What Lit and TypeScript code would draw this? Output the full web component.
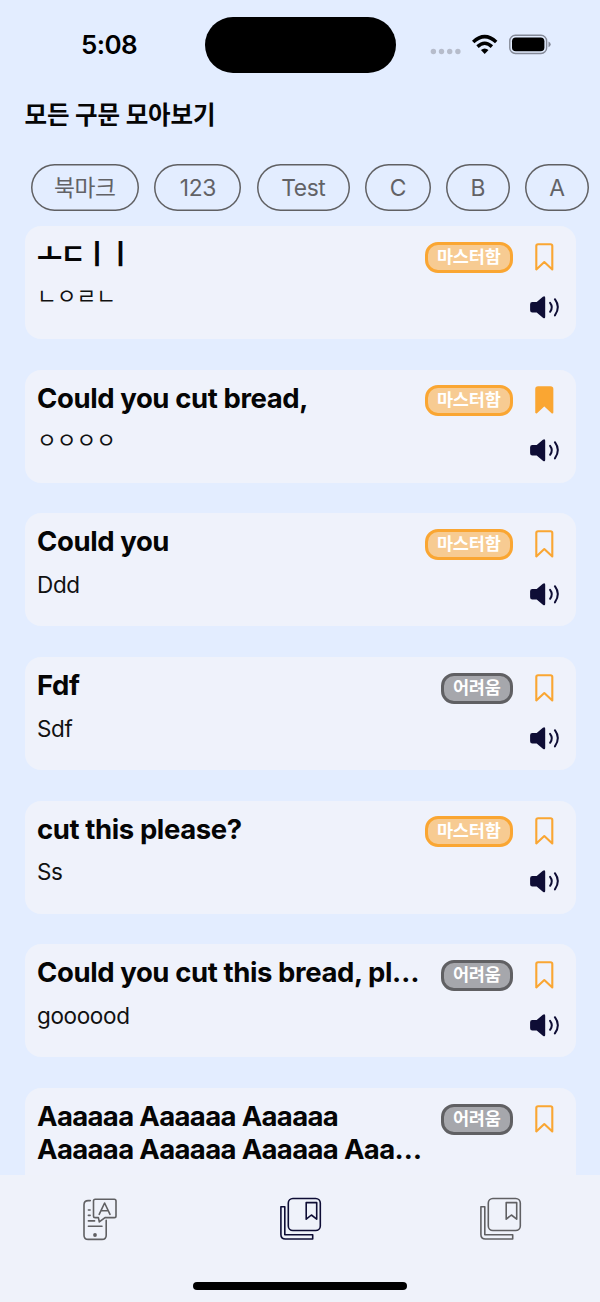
import { LitElement, html, css, svg } from "lit";
import { customElement, property } from "lit/decorators.js";
import { classMap } from "lit/directives/class-map.js";

type Level = "master" | "hard";
interface Phrase {
  title: string;
  meaning: string;
  level: Level;
  saved?: boolean;
}

const LABELS: Record<Level, string> = { master: "마스터함", hard: "어려움" };

const PHRASES: Phrase[] = [
  { title: "ㅗㄷㅣㅣ", meaning: "ㄴㅇㄹㄴ", level: "master" },
  { title: "Could you cut bread,", meaning: "ㅇㅇㅇㅇ", level: "master", saved: true },
  { title: "Could you", meaning: "Ddd", level: "master" },
  { title: "Fdf", meaning: "Sdf", level: "hard" },
  { title: "cut this please?", meaning: "Ss", level: "master" },
  { title: "Could you cut this bread, pl…", meaning: "goooood", level: "hard" },
  { title: "Aaaaaa Aaaaaa Aaaaaa\nAaaaaa Aaaaaa Aaaaaa Aaa…", meaning: "", level: "hard" },
];

const CHIPS = [
  { label: "북마크", width: 108.5 },
  { label: "123", width: 87 },
  { label: "Test", width: 93 },
  { label: "C", width: 65.5 },
  { label: "B", width: 63.5 },
  { label: "A", width: 64 },
];

const isJamo = (s: string) => /^[\u3131-\u318e]+$/.test(s);

@customElement("phrase-card")
class PhraseCard extends LitElement {
  @property({ attribute: false }) phrase!: Phrase;

  static styles = css`
    :host { display: block; flex: none; }
    .card {
      box-sizing: border-box;
      height: 113px;
      padding: 12px 17px 0 12.5px;
      border-radius: 16px;
      background: #eff2fb;
      display: flex;
      align-items: flex-start;
    }
    .card.tall { height: 146px; }
    .text { flex: 1; min-width: 0; }
    .title {
      font-size: 27.5px;
      line-height: 33px;
      font-weight: 700;
      letter-spacing: -0.4px;
      white-space: pre;
      color: #050505;
    }
    .meaning {
      margin-top: 12.5px;
      font-size: 22.5px;
      line-height: 28px;
      letter-spacing: -0.35px;
      color: #111;
    }
    .title.jamo { letter-spacing: -1.7px; }
    .meaning.jamo { margin-top: 11px; font-size: 21.5px; letter-spacing: 0; }
    .tall .title { letter-spacing: -0.65px; }
    .badge {
      box-sizing: border-box;
      width: 88.5px;
      height: 31px;
      margin: 3.7px 16px 0 0;
      border: 3px solid #faa632;
      border-radius: 13px;
      background: #f7cb92;
      color: #fff;
      font-size: 17.5px;
      line-height: 24px;
      font-weight: 700;
      letter-spacing: -0.2px;
      text-align: center;
    }
    .badge.hard { width: 72.5px; border-color: #606063; background: #a6a7ac; }
    .icons { width: 30px; padding-top: 4.7px; display: flex; flex-direction: column; align-items: center; gap: 25px; }
    .tall .icons { gap: 58px; }
    svg { display: block; overflow: visible; }
    .mark { fill: none; stroke: #faa632; stroke-width: 2.1; stroke-linejoin: round; }
    .mark.saved { fill: #faa632; }
    .solid { fill: #0e0d35; }
    .wave { fill: none; stroke: #0e0d35; stroke-width: 2; stroke-linecap: round; }
  `;

  render() {
    const p = this.phrase;
    return html`<div class=${classMap({ card: true, tall: p.title.includes("\n") })}>
      <div class="text">
        <div class=${classMap({ title: true, jamo: isJamo(p.title) })}>${p.title}</div>
        <div class=${classMap({ meaning: true, jamo: isJamo(p.meaning) })}>${p.meaning}</div>
      </div>
      <div class="badge ${p.level}">${LABELS[p.level]}</div>
      <div class="icons">
        <svg width="18" height="28" viewBox="-.3 0 18 28">
          <path class=${classMap({ mark: true, saved: !!p.saved })} d="M1 26.4V3Q1 1.2 2.8 1.2H15.2Q17 1.2 17 3V26.4L9 19Z" />
        </svg>
        <svg width="30" height="23" viewBox="-.9 0 30 23">
          <path class="solid" d="M2.4 6H6.8L13 .7Q15.3-.8 15.3 1.8V20.8Q15.3 23.3 13 21.8L6.8 16.4H2.4Q.2 16.4 .2 14.2V8.2Q.2 6 2.4 6Z" />
          <path class="wave" d="M20.2 6.8Q23.6 11.2 20.2 15.8M25 3.2Q30.9 11.2 25 19.4" />
        </svg>
      </div>
    </div>`;
  }
}

const library = svg`
  <rect x="8.3" y="1.5" width="32" height="32" rx="4.6" />
  <path d="M26.2 5.6H36.7V22.2L31.4 18L26.2 22.2ZM.9 9.8H4.8V37.8H32.7V42H5.4Q.9 42 .9 37.5Z" />`;

@customElement("app-root")
class AppRoot extends LitElement {
  static styles = css`
    :host {
      display: flex;
      flex-direction: column;
      height: 1302px;
      overflow: hidden;
      background: #e3edff;
      font-family: Inter, "Noto Sans CJK KR", sans-serif;
    }
    .status {
      flex: none;
      height: 90px;
      display: grid;
      grid-template-columns: 204.5px 191.5px 1fr;
    }
    .time { padding: 29px 0 0 81px; font-size: 26px; line-height: 32px; font-weight: 600; letter-spacing: -0.6px; }
    .island { margin-top: 17px; height: 56px; border-radius: 28px; background: #000; }
    .signals { padding: 33px 0 0 34px; }
    svg { display: block; overflow: visible; }
    h1 {
      flex: none;
      box-sizing: border-box;
      margin: 0;
      padding: 1px 0 0 24.5px;
      height: 74px;
      font-size: 24.5px;
      line-height: 49px;
      font-weight: 700;
      letter-spacing: -0.1px;
      color: #050505;
    }
    .chips { flex: none; display: flex; gap: 15.4px; padding-left: 30.5px; height: 62px; }
    .chip {
      box-sizing: border-box;
      flex: none;
      height: 46.5px;
      box-shadow: inset 0 0 0 1.5px #606063;
      border-radius: 24px;
      color: #626266;
      font-size: 22.8px;
      line-height: 47px;
      text-align: center;
      letter-spacing: -0.4px;
    }
    .list {
      flex: 1;
      min-height: 0;
      overflow: hidden;
      padding: 0 24px 0 24.5px;
      display: flex;
      flex-direction: column;
      gap: 30.7px;
    }
    nav {
      flex: none;
      height: 127px;
      background: #eff2fa;
      display: flex;
      flex-direction: column;
      align-items: center;
    }
    .tabs { align-self: stretch; height: 107px; display: grid; grid-template-columns: repeat(3, 1fr); justify-items: center; padding-top: 22px; box-sizing: border-box; }
    .tab { fill: none; stroke: #606063; stroke-width: 1.6; stroke-linejoin: round; stroke-linecap: round; }
    .tab.active { stroke: #0e0d35; }
    .dot { fill: #606063; stroke: none; }
    .home { width: 214px; height: 8px; border-radius: 4px; background: #000; }
  `;

  render() {
    return html`
      <div class="status">
        <div class="time">5:08</div>
        <div class="island"></div>
        <div class="signals">
          <svg width="121" height="23" viewBox="0 0 121 23">
            <g fill="#b6bccb">
              ${[3.4, 11.5, 19.7, 27.9].map((x) => svg`<circle cx=${x} cy="18.5" r="2.7" />`)}
            </g>
            <g fill="none" stroke="#000" stroke-width="3.5">
              <path d="M43.2 9Q54.7-1.8 66.2 9" />
              <path d="M47.5 13.6Q54.7 6.9 61.9 13.6" />
            </g>
            <path d="M50.9 17Q54.7 13.8 58.5 17L54.7 21Z" />
            <rect x="79.8" y="2.3" width="36.8" height="18.2" rx="5.6" fill="none" stroke="#848997" stroke-width="1.4" />
            <rect x="82" y="4.5" width="32.4" height="13.8" rx="3.8" />
            <path d="M118.5 8.6Q120.7 9.6 120.7 11.4Q120.7 13.2 118.5 14.2Z" fill="#848997" />
          </svg>
        </div>
      </div>
      <h1>모든 구문 모아보기</h1>
      <div class="chips">
        ${CHIPS.map((c) => html`<div class="chip" style="width:${c.width}px">${c.label}</div>`)}
      </div>
      <div class="list">
        ${PHRASES.map((p) => html`<phrase-card .phrase=${p}></phrase-card>`)}
      </div>
      <nav>
        <div class="tabs">
          <svg class="tab" width="34" height="43" viewBox="0 0 34 43">
            <path d="M7.3 3.6H5.2Q1 3.6 1 7.8V38.2Q1 42.4 5.2 42.4H19Q23.2 42.4 23.2 38.2V23.4" />
            <path d="M12.2 2.2H31.3Q33 2.2 33 3.9V18.9Q33 20.6 31.3 20.6H22L16.3 24.9L15.4 20.6H12.2Q10.5 20.6 10.5 18.9V3.9Q10.5 2.2 12.2 2.2Z" />
            <path d="M16.2 17.3L21.6 6L27 17.3M18 13.7H25.2M5.4 13H7.1M5.4 18.4H7.1M5.4 23.9H11.6M5.4 29.3H19" />
            <circle class="dot" cx="12" cy="38" r="1.9" />
          </svg>
          <svg class="tab active" width="41" height="43" viewBox="0 0 41 43">${library}</svg>
          <svg class="tab" width="41" height="43" viewBox="0 0 41 43">${library}</svg>
        </div>
        <div class="home"></div>
      </nav>
    `;
  }
}
